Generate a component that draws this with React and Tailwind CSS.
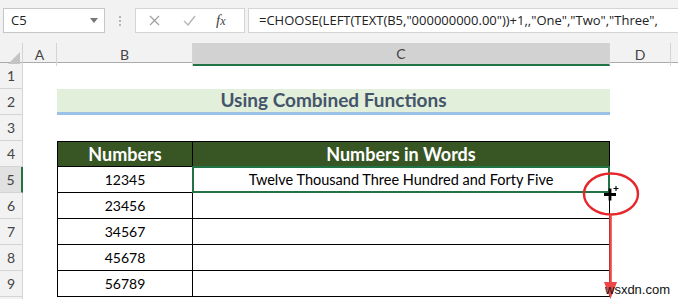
// Feuille Excel : barre de formule, en-têtes, tableau "Numbers in Words"
import React from 'react';

const rowsData = [
  { n: 1 },
  { n: 2, title: true },
  { n: 3 },
  { n: 4, head: true },
  { n: 5, b: '12345', c: 'Twelve Thousand Three Hundred and Forty Five', sel: true },
  { n: 6, b: '23456' },
  { n: 7, b: '34567' },
  { n: 8, b: '45678' },
  { n: 9, b: '56789' },
  { n: 10 },
];

function RowHeader({ n, sel }) {
  return (
    <div
      className={`flex items-center justify-center border-b border-r border-[#d4d4d4] text-[14px] text-[#444] ${
        sel ? 'bg-[#e1e1e1] border-r-2 border-r-[#217346]' : 'bg-[#f2f2f2]'
      }`}
    >
      {n < 10 ? n : ''}
    </div>
  );
}

function Row({ r }) {
  const tableRow = r.head || r.b;
  return (
    <>
      <RowHeader n={r.n} sel={r.sel} />
      <div />
      {r.title ? (
        <div className="col-span-2 flex items-center justify-center border-b-[3px] border-[#9bc2e6] bg-[#e2efda] text-[19px] font-bold text-[#44546a]">
          Using Combined Functions
        </div>
      ) : tableRow ? (
        <>
          <div
            className={`flex items-center justify-center border-b border-l border-r border-black ${
              r.head ? 'border-t bg-[#375623] text-[18px] font-bold text-white' : 'text-[14px] text-black'
            }`}
          >
            {r.head ? 'Numbers' : r.b}
          </div>
          <div
            className={`relative flex items-center justify-center border-b border-r border-black ${
              r.head ? 'border-t bg-[#375623] text-[18px] font-bold text-white' : 'text-[14.5px] text-black'
            }`}
          >
            {r.head ? 'Numbers in Words' : r.c || ''}
            {r.sel && <div className="absolute -left-px -top-px -right-px -bottom-px border-2 border-[#217346]" />}
          </div>
        </>
      ) : (
        <>
          <div />
          <div />
        </>
      )}
      <div />
      <div />
    </>
  );
}

export default function App() {
  return (
    <div
      className="relative h-[299px] w-[678px] overflow-hidden bg-white"
      style={{ fontFamily: 'Lato, "Open Sans", sans-serif' }}
    >
      {/* Barre de formule */}
      <div className="flex h-[43px] items-start gap-0 bg-[#f2f2f2] pt-2" style={{ fontFamily: '"Open Sans", "Noto Sans", sans-serif' }}>
        <div className="ml-[3px] flex h-[25px] w-[102px] items-center justify-between border border-[#c6c6c6] bg-white pl-[7px] pr-[6px] text-[13px] text-[#222]">
          <span>C5</span>
          <svg width="8" height="5" viewBox="0 0 8 5"><path d="M0 0h8L4 5z" fill="#777" /></svg>
        </div>
        <div className="flex h-[25px] w-[30px] flex-col items-center justify-center gap-[2px]">
          <span className="h-[2px] w-[2px] bg-[#b5b5b5]" />
          <span className="h-[2px] w-[2px] bg-[#b5b5b5]" />
          <span className="h-[2px] w-[2px] bg-[#b5b5b5]" />
        </div>
        <div className="flex h-[25px] w-[110px] items-center border border-[#d4d4d4] bg-white">
          <svg className="ml-[13px]" width="11" height="11" viewBox="0 0 11 11">
            <path d="M1 1l9 9M10 1l-9 9" stroke="#a0a0a0" strokeWidth="1.3" />
          </svg>
          <svg className="ml-[23px]" width="13" height="11" viewBox="0 0 13 11">
            <path d="M1 6l4 4 7-9" stroke="#b5b5b5" strokeWidth="1.4" fill="none" />
          </svg>
          <span className="ml-[20px] text-[15px] italic text-[#444]" style={{ fontFamily: '"Liberation Serif", serif' }}>
            f<span className="text-[12px]">x</span>
          </span>
        </div>
        <div className="ml-[3px] flex h-[25px] flex-1 items-center border border-r-0 border-[#d4d4d4] bg-white pl-[10px] text-[13px] whitespace-nowrap text-[#222]">
          =CHOOSE(LEFT(TEXT(B5,"000000000.00"))+1,,"One","Two","Three",
        </div>
      </div>

      {/* En-têtes de colonnes */}
      <div className="grid h-[20px] grid-cols-[23px_34px_136px_417px_61px_1fr] border-b border-[#ababab] bg-[#f2f2f2] text-[14px] text-[#444]">
        <div className="relative border-r border-[#d4d4d4]">
          <svg className="absolute bottom-[2px] right-[2px]" width="12" height="12" viewBox="0 0 12 12">
            <path d="M12 0v12H0z" fill="#c4c4c4" />
          </svg>
        </div>
        <div className="flex items-center justify-center border-r border-[#d4d4d4]">A</div>
        <div className="flex items-center justify-center border-r border-[#d4d4d4]">B</div>
        <div className="flex items-center justify-center border-b-2 border-r border-[#d4d4d4] border-b-[#217346] bg-[#d2d2d2]">C</div>
        <div className="flex items-center justify-center border-r border-[#d4d4d4]">D</div>
        <div />
      </div>

      {/* Cellules */}
      <div className="grid grid-cols-[23px_34px_136px_417px_61px_1fr] auto-rows-[26px]">
        {rowsData.map((r) => (
          <Row key={r.n} r={r} />
        ))}
      </div>

      {/* Curseur, cercle et flèche de recopie */}
      <svg className="pointer-events-none absolute left-0 top-0" width="678" height="299" viewBox="0 0 678 299">
        <ellipse cx="611" cy="194" rx="27" ry="20.5" fill="none" stroke="#e5262b" strokeWidth="2.4" />
        <path d="M610.5 215V286" stroke="#ee4646" strokeWidth="2.6" />
        <path d="M604 282h13l-6.5 17z" fill="#ee4646" />
        <path d="M604 194.5h12M610 188.5v12" stroke="#000" strokeWidth="2.8" />
        <path d="M613.5 188.5h5M616 186v5" stroke="#000" strokeWidth="1.1" />
      </svg>
      <div
        className="absolute left-[605px] top-[283px] text-[13px] leading-none text-[#111]"
        style={{ fontFamily: '"Liberation Sans", Arial, sans-serif' }}
      >
        wsxdn.com
      </div>
    </div>
  );
}
